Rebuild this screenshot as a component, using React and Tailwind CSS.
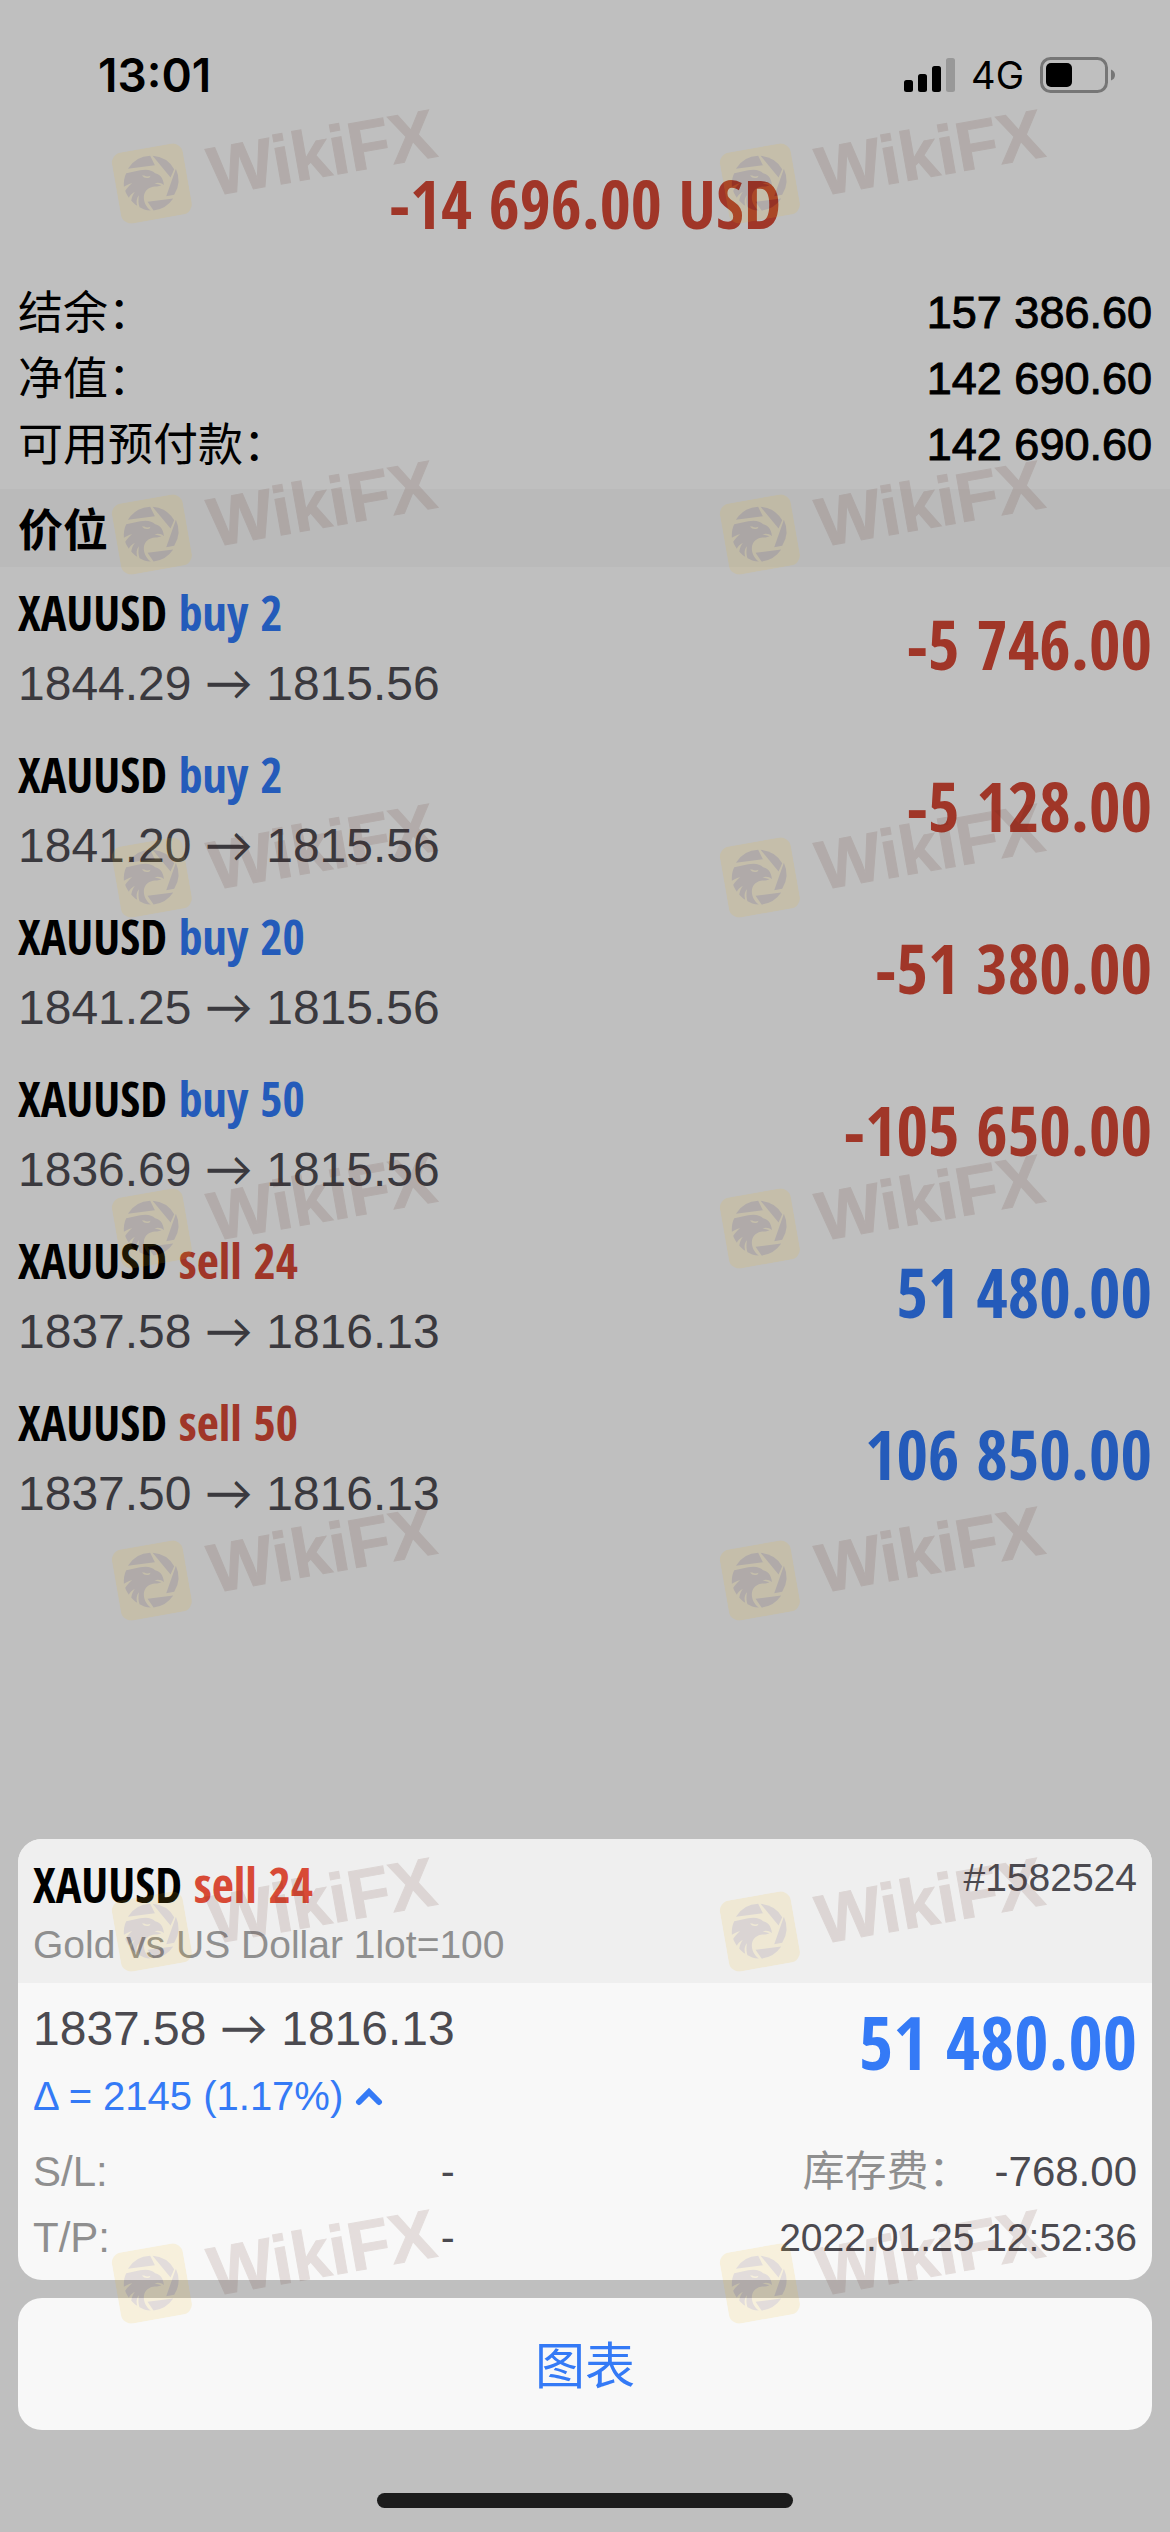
const positions = [
  { symbol: 'XAUUSD', side: 'buy', lots: 2, open: '1844.29', now: '1815.56', profit: '-5 746.00' },
  { symbol: 'XAUUSD', side: 'buy', lots: 2, open: '1841.20', now: '1815.56', profit: '-5 128.00' },
  { symbol: 'XAUUSD', side: 'buy', lots: 20, open: '1841.25', now: '1815.56', profit: '-51 380.00' },
  { symbol: 'XAUUSD', side: 'buy', lots: 50, open: '1836.69', now: '1815.56', profit: '-105 650.00' },
  { symbol: 'XAUUSD', side: 'sell', lots: 24, open: '1837.58', now: '1816.13', profit: '51 480.00' },
  { symbol: 'XAUUSD', side: 'sell', lots: 50, open: '1837.50', now: '1816.13', profit: '106 850.00' },
];

const account = [
  ['结余：', '157 386.60'],
  ['净值：', '142 690.60'],
  ['可用预付款：', '142 690.60'],
];

// Extra space under each row of the background marks.
const markRows = ['mb-[279px]', 'mb-[271px]', 'mb-[279px]', 'mb-[280px]', 'mb-[279px]', 'mb-[280px]', 'mb-0'];

function StatusBar() {
  return (
    <header className="flex h-[150px] items-center justify-between pr-[54px] pl-[98px] font-[Inter,sans-serif]">
      <time className="text-[46px] leading-none font-semibold">13:01</time>
      <div className="flex items-center gap-4">
        <svg className="h-[34px] w-[51px]" viewBox="0 0 51 34" aria-label="信号">
          <rect x="0" y="22" width="9" height="12" rx="2.5" />
          <rect x="14" y="16" width="9" height="18" rx="2.5" />
          <rect x="28" y="8" width="9" height="26" rx="2.5" />
          <rect x="42" y="0" width="9" height="34" rx="2.5" fill="#989898" />
        </svg>
        <span className="text-[38px] leading-none">4G</span>
        <svg className="h-9 w-[76px]" viewBox="0 0 76 36" aria-label="电池">
          <rect x="1.5" y="1.5" width="65" height="33" rx="9" fill="none" stroke="#767676" strokeWidth="3" />
          <rect x="6" y="6" width="26" height="24" rx="5" />
          <path d="M71 12.500q4 1.500 4 5.500t-4 5.500z" fill="#767676" />
        </svg>
      </div>
    </header>
  );
}

function Arrow() {
  return <span className="font-[Lato,sans-serif]">→</span>;
}

function Title({ symbol, side, lots, color }) {
  return (
    <span className="font-['Open_Sans_Condensed',sans-serif] text-[48px] leading-[70px] font-bold">
      {symbol} <span className={color}>{side} {lots}</span>
    </span>
  );
}

function Mark() {
  return (
    <div className="flex h-[72px] w-80 shrink-0 -rotate-10 items-center gap-[22px] opacity-12">
      <svg className="size-[72px] shrink-0" viewBox="29 47 216 216">
        <rect x="29" y="47" width="216" height="216" rx="32" fill="#f0be1e" />
        <g transform="rotate(10 137 155)" fill="#491b14">
          <path d="M65 111A82 82 0 0 1 132 72L146 100Z" />
          <path d="M139 72A82 82 0 0 1 204 112L193 137Z" />
          <path d="M209 111A82 82 0 0 1 204 189L180 193Z" />
          <path d="M201 200A82 82 0 0 1 142 236L124 210Z" />
          <path d="M60 124C80 122 95 115 118 114C130 114 140 118 147 124C160 126 172 138 173 160C165 152 155 151 145 154C150 157 160 157 166 160C155 165 150 163 140 165C122 169 112 182 113 200C114 215 122 228 134 236C118 236 108 230 100 226C96 215 96 205 98 190C90 200 90 212 93 222C84 216 79 211 75 206C77 196 80 188 86 180C76 186 70 192 68 198C62 190 59 184 57 177C62 168 70 160 78 154C68 156 60 160 53 165C52 150 54 136 60 124Z" />
          <path d="M107 131Q116 142 130 137L133 132Q122 136 114 131Z" fill="#f0be1e" />
        </g>
      </svg>
      <span className="text-[69px] leading-[66px] font-bold text-[#5a2418] [-webkit-text-stroke:1px]">WikiFX</span>
    </div>
  );
}

export default function App() {
  return (
    <div className="relative flex min-h-screen flex-col bg-[#bfbfbf] font-['Liberation_Sans','Noto_Sans_CJK_SC',sans-serif] text-black">
      <StatusBar />
      <h1 className="text-center font-['Open_Sans_Condensed',sans-serif] text-[67px] leading-[106px] font-bold text-[#a03628]">
        -14 696.00 USD
      </h1>

      <dl className="mt-6 mb-[11px] px-[18px] text-[45px] leading-[66px]">
        {account.map(([label, value]) => (
          <div key={label} className="flex h-[66px] items-center justify-between">
            <dt className="pt-0.5">{label}</dt>
            <dd className="[-webkit-text-stroke:1px]">{value}</dd>
          </div>
        ))}
      </dl>

      <h2 className="bg-[#bababa] px-[18px] font-['Noto_Sans_CJK_SC',sans-serif] text-[45px] leading-[78px] font-bold">价位</h2>

      <ul>
        {positions.map((p) => (
          <li key={p.open + p.lots} className="flex h-[162px] items-center justify-between px-[18px]">
            <div className="flex flex-col">
              <Title symbol={p.symbol} side={p.side} lots={p.lots} color={p.side === 'buy' ? 'text-[#245bba]' : 'text-[#a03628]'} />
              <span className="text-[48px] leading-[68px] text-[#3a393e]">
                {p.open} <Arrow /> {p.now}
              </span>
            </div>
            <span
              className={
                "pb-2 font-['Open_Sans_Condensed',sans-serif] text-[68px] leading-[70px] font-bold " +
                (p.profit.startsWith('-') ? 'text-[#a03628]' : 'text-[#245bba]')
              }
            >
              {p.profit}
            </span>
          </li>
        ))}
      </ul>

      <div className="mt-auto px-[18px]">
        <section className="overflow-hidden rounded-3xl bg-[#f8f8f8] text-[#4b4a50]">
          <div className="flex h-36 justify-between bg-[#efefef] px-[15px] pt-[11px]">
            <div className="flex flex-col text-black">
              <Title symbol="XAUUSD" side="sell" lots={24} color="text-[#d84a36]" />
              <span className="text-[39px] leading-[50px] text-[#8f8f8f]">Gold vs US Dollar 1lot=100</span>
            </div>
            <span className="text-[39px] leading-[56px]">#1582524</span>
          </div>
          <div className="grid h-[297px] grid-cols-[auto_1fr] px-[15px] pt-2.5">
            <div className="flex flex-col items-start">
              <span className="text-[48px] leading-[68px]">
                1837.58 <Arrow /> 1816.13
              </span>
              <button type="button" className="flex items-center gap-3 text-[40px] leading-[66px] text-[#347af6]">
                Δ = 2145 (1.17%)
                <svg className="h-5 w-7" viewBox="0 0 28 20" fill="none" stroke="currentColor" strokeWidth="6" strokeLinecap="round" aria-hidden="true">
                  <path d="M4 16L14 6L24 16" />
                </svg>
              </button>
            </div>
            <span className="text-right font-['Open_Sans_Condensed',sans-serif] text-[74px] leading-[98px] font-bold text-[#347af6]">
              51 480.00
            </span>
            <dl className="text-[42px] leading-[66px]">
              <div className="flex justify-between">
                <dt className="text-[#8f8f8f]">S/L:</dt>
                <dd>-</dd>
              </div>
              <div className="flex justify-between">
                <dt className="text-[#8f8f8f]">T/P:</dt>
                <dd>-</dd>
              </div>
            </dl>
            <div className="flex flex-col items-end text-[42px] leading-[66px]">
              <dl className="flex h-[66px] gap-6">
                <dt className="text-[#8f8f8f]">库存费：</dt>
                <dd>-768.00</dd>
              </dl>
              <time className="text-[39px]">2022.01.25 12:52:36</time>
            </div>
          </div>
        </section>
        <button type="button" className="mt-[18px] h-[132px] w-full rounded-3xl bg-[#f8f8f8] pt-1.5 text-[50px] text-[#347af6]">
          图表
        </button>
      </div>
      <div className="mt-[63px] mb-6 h-[15px] w-[416px] self-center rounded-full bg-[#1c1c1c]" />

      <div className="pointer-events-none absolute inset-0 flex flex-col overflow-hidden pt-[126px] pl-[114px]" aria-hidden="true">
        {markRows.map((space, i) => (
          <div key={i} className={'flex shrink-0 gap-72 ' + space}>
            <Mark />
            <Mark />
          </div>
        ))}
      </div>
    </div>
  );
}
